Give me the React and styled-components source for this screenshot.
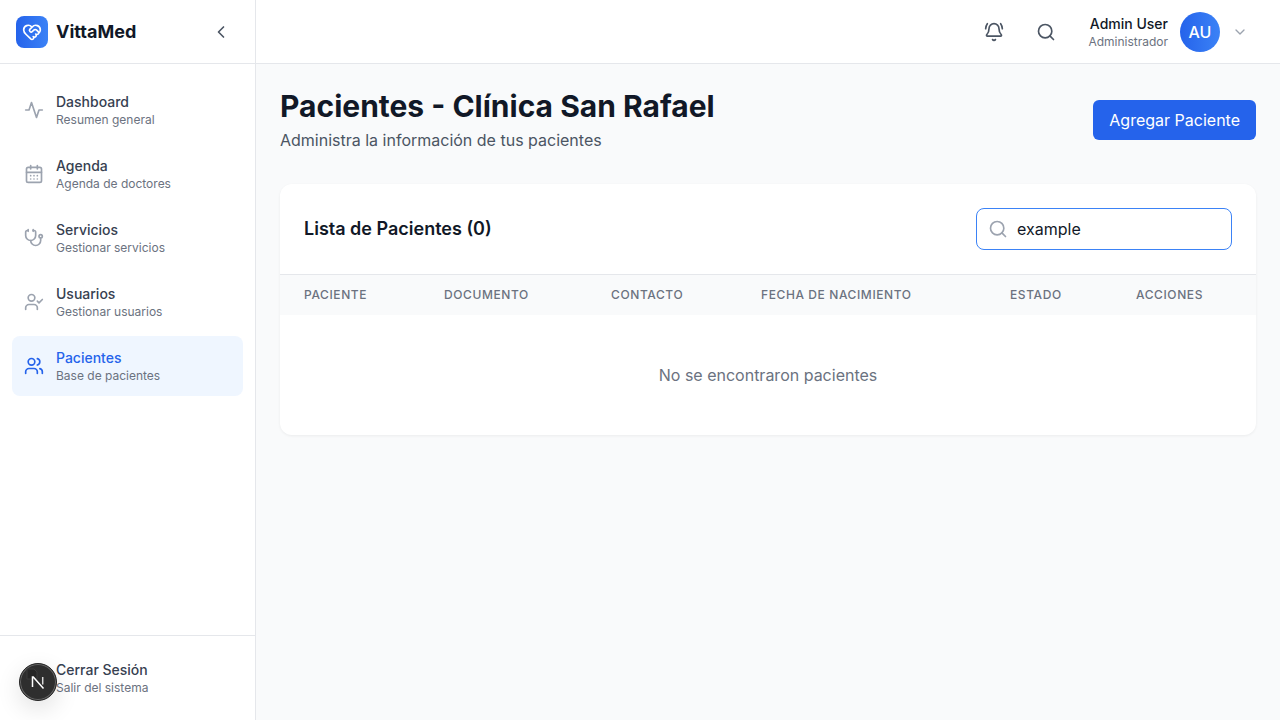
import React from "react";
import styled, { createGlobalStyle } from "styled-components";
import { HeartHandshake, ChevronLeft, ChevronDown, CalendarDays, Stethoscope, UserCheck, Users, BellRing, Search } from "lucide-react";

const Global = createGlobalStyle`
  * { box-sizing: border-box; }
  html, body { margin: 0; padding: 0; height: 100%; }
  body { font-family: Inter, "Liberation Sans", sans-serif; background: #f9fafb; color: #111827; overflow: hidden; }
`;

const Shell = styled.div`display: flex; width: 1280px; height: 720px; position: relative;`;
const Sidebar = styled.aside`
  width: 256px; height: 720px; flex: none; background: #fff; border-right: 1px solid #e5e7eb;
  display: flex; flex-direction: column;
`;
const Brand = styled.div`
  height: 64px; flex: none; display: flex; align-items: center; justify-content: space-between;
  padding: 0 16px; border-bottom: 1px solid #e5e7eb;
`;
const BrandLeft = styled.div`display: flex; align-items: center; gap: 8px;`;
const Logo = styled.div`
  width: 32px; height: 32px; border-radius: 8px; display: flex; align-items: center; justify-content: center;
  color: #fff; background: linear-gradient(to right, #2563eb, #3b82f6);
`;
const BrandName = styled.span`font-size: 18px; line-height: 28px; font-weight: 700;`;
const Collapse = styled.button`
  width: 32px; height: 32px; border: 0; background: none; padding: 0; margin-right: 2px; color: #4b5563;
  display: flex; align-items: center; justify-content: center;
`;
const Nav = styled.nav`flex: 1; padding: 16px 12px; display: flex; flex-direction: column; gap: 4px;`;
const NavRow = styled.a`
  height: 60px; display: flex; align-items: center; gap: 12px; padding: 0 12px; border-radius: 8px;
  background: ${p => (p.$active ? "#eff6ff" : "transparent")};
  color: ${p => (p.$active ? "#2563eb" : "#9ca3af")};
`;
const NavText = styled.div`display: flex; flex-direction: column;`;
const NavTitle = styled.span`
  font-size: 14px; line-height: 20px; font-weight: 500; color: ${p => (p.$active ? "#2563eb" : "#374151")};
`;
const NavSub = styled.span`font-size: 12px; line-height: 16px; color: #6b7280;`;
const IconSlot = styled.span`width: 20px; flex: none;`;
const SideFooter = styled.div`border-top: 1px solid #e5e7eb; padding: 12px 12px 0; height: 85px;`;

const Main = styled.div`flex: 1; min-width: 0; display: flex; flex-direction: column;`;
const Topbar = styled.header`
  height: 64px; flex: none; background: #fff; border-bottom: 1px solid #e5e7eb;
  display: flex; align-items: center; justify-content: flex-end; padding: 0 32px 0 0;
`;
const IconBtn = styled.button`
  width: 40px; height: 40px; border: 0; background: none; padding: 0; color: #4b5563;
  display: flex; align-items: center; justify-content: center;
`;
const IconGroup = styled.div`display: flex; gap: 12px;`;
const User = styled.div`display: flex; align-items: center; margin-left: 22px;`;
const UserText = styled.div`display: flex; flex-direction: column; align-items: flex-end; margin-right: 12px;`;
const UserName = styled.span`font-size: 14px; line-height: 20px; font-weight: 500; color: #111827;`;
const UserRole = styled.span`font-size: 12px; line-height: 16px; color: #6b7280;`;
const Avatar = styled.div`
  width: 40px; height: 40px; border-radius: 50%; color: #fff; font-size: 16px; font-weight: 500;
  display: flex; align-items: center; justify-content: center;
  background: linear-gradient(to right, #2563eb, #3b82f6); margin-right: 12px;
`;
const Caret = styled(ChevronDown)`color: #9ca3af;`;

const Content = styled.main`padding: 24px; display: flex; flex-direction: column; gap: 32px;`;
const PageHead = styled.div`display: flex; align-items: center; justify-content: space-between;`;
const Heading = styled.h1`margin: 0; font-size: 30px; line-height: 36px; font-weight: 700; color: #111827;`;
const SubHeading = styled.p`margin: 4px 0 0; font-size: 16px; line-height: 24px; color: #4b5563;`;
const Primary = styled.button`
  height: 40px; padding: 0 16px; border: 0; border-radius: 6px; background: #2563eb; color: #fff;
  font: 400 16px/24px Inter, sans-serif;
`;
const Card = styled.section`
  background: #fff; border-radius: 12px; box-shadow: 0 1px 3px rgba(0,0,0,.06); overflow: hidden;
`;
const CardHead = styled.div`
  height: 91px; padding: 0 24px; display: flex; align-items: center; justify-content: space-between; border-bottom: 1px solid #e5e7eb;
`;
const CardTitle = styled.h2`margin: 0; font-size: 18px; line-height: 28px; font-weight: 600; color: #111827;`;
const SearchBox = styled.label`
  width: 256px; height: 42px; border: 1px solid #3b82f6; border-radius: 8px; display: flex; align-items: center;
  padding: 0 12px 0 11px; gap: 9px; color: #9ca3af;
`;
const SearchInput = styled.input`
  flex: 1; min-width: 0; border: 0; outline: 0; background: none; padding: 0; color: #111827; font: 400 16px/24px Inter, sans-serif;
`;
const HeadRow = styled.div`
  display: grid; grid-template-columns: 140px 167px 150px 249px 126px 1fr; height: 40px; align-items: center;
  background: #f9fafb; padding-left: 24px;
`;
const HeadCell = styled.span`font-size: 12px; line-height: 16px; font-weight: 500; letter-spacing: 0.6px; color: #6b7280;`;
const Empty = styled.div`height: 120px; display: flex; align-items: center; justify-content: center; font-size: 16px; color: #6b7280;`;

const Badge = styled.div`
  position: absolute; left: 19px; top: 663px; width: 38px; height: 38px; border-radius: 50%; background: #2e2e2e;
  border: 1px solid #262626; box-shadow: inset 0 0 0 1px #666, 0 8px 24px rgba(0,0,0,.12); display: flex; align-items: center; justify-content: center;
`;

const ActivityIcon = (props) => (
  <svg width="20" height="20" viewBox="0 0 24 24" fill="none" stroke="currentColor" strokeWidth="2" strokeLinecap="round" strokeLinejoin="round" {...props}>
    <path d="M22 12h-4l-3 9L9 3l-3 9H2" />
  </svg>
);

const items = [
  [ActivityIcon, "Dashboard", "Resumen general"],
  [CalendarDays, "Agenda", "Agenda de doctores"],
  [Stethoscope, "Servicios", "Gestionar servicios"],
  [UserCheck, "Usuarios", "Gestionar usuarios"],
  [Users, "Pacientes", "Base de pacientes", true],
];
const cols = ["PACIENTE", "DOCUMENTO", "CONTACTO", "FECHA DE NACIMIENTO", "ESTADO", "ACCIONES"];

export default function App() {
  return (
    <Shell>
      <Global />
      <Sidebar>
        <Brand>
          <BrandLeft>
            <Logo><HeartHandshake size={20} /></Logo>
            <BrandName>VittaMed</BrandName>
          </BrandLeft>
          <Collapse><ChevronLeft size={20} /></Collapse>
        </Brand>
        <Nav>
          {items.map(([I, t, s, a]) => (
            <NavRow key={t} $active={a}>
              <I size={20} />
              <NavText>
                <NavTitle $active={a}>{t}</NavTitle>
                <NavSub>{s}</NavSub>
              </NavText>
            </NavRow>
          ))}
        </Nav>
        <SideFooter>
          <NavRow>
            <IconSlot />
            <NavText>
              <NavTitle>Cerrar Sesión</NavTitle>
              <NavSub>Salir del sistema</NavSub>
            </NavText>
          </NavRow>
        </SideFooter>
      </Sidebar>
      <Main>
        <Topbar>
          <IconGroup>
            <IconBtn><BellRing size={20} /></IconBtn>
            <IconBtn><Search size={20} /></IconBtn>
          </IconGroup>
          <User>
            <UserText>
              <UserName>Admin User</UserName>
              <UserRole>Administrador</UserRole>
            </UserText>
            <Avatar>AU</Avatar>
            <Caret size={16} />
          </User>
        </Topbar>
        <Content>
          <PageHead>
            <div>
              <Heading>Pacientes - Clínica San Rafael</Heading>
              <SubHeading>Administra la información de tus pacientes</SubHeading>
            </div>
            <Primary>Agregar Paciente</Primary>
          </PageHead>
          <Card>
            <CardHead>
              <CardTitle>Lista de Pacientes (0)</CardTitle>
              <SearchBox>
                <Search size={20} />
                <SearchInput defaultValue="example" />
              </SearchBox>
            </CardHead>
            <HeadRow>{cols.map(c => <HeadCell key={c}>{c}</HeadCell>)}</HeadRow>
            <Empty>No se encontraron pacientes</Empty>
          </Card>
        </Content>
      </Main>
      <Badge>
        <svg width="28" height="28" viewBox="0 0 28 28" fill="none">
          <path d="M3 1h7l3 3v7H3z" fill="#262626" stroke="#3a3a3a" strokeWidth="1" />
          <path d="M8.5 19V9h.8L19.5 20.5" stroke="#fff" strokeWidth="1.5" />
          <path d="M18.7 9v7.5" stroke="#d8d8d8" strokeWidth="1.5" />
        </svg>
      </Badge>
    </Shell>
  );
}
